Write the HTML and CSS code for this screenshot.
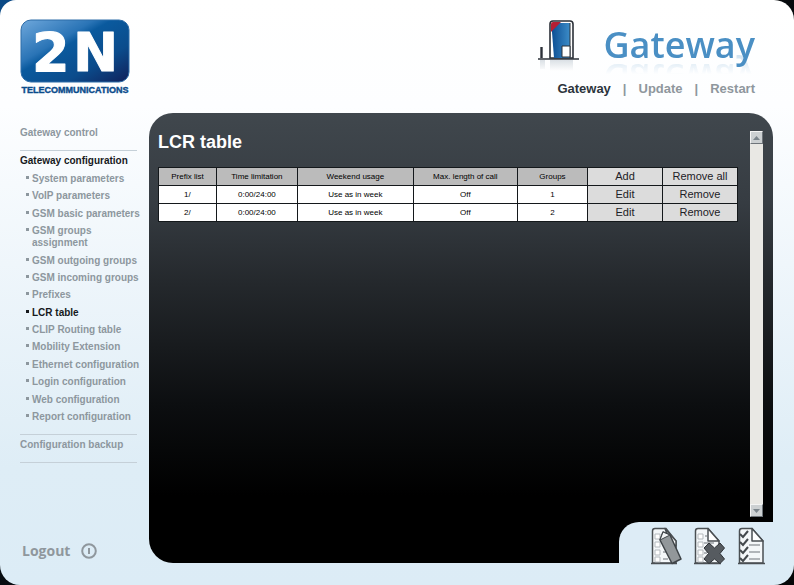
FILE: index.html
```html
<!DOCTYPE html>
<html lang="en">
<head>
<meta charset="utf-8">
<title>2N Gateway - LCR table</title>
<link rel="stylesheet" href="styles.css">
</head>
<body>
<div class="page">
  <header class="header">
    <svg class="logo" viewBox="0 0 110 76" role="img" aria-label="2N Telecommunications">
      <defs>
        <linearGradient id="badge" x1="0" y1="0" x2="1" y2="1">
          <stop offset="0" stop-color="#6fa8dc"/>
          <stop offset=".34" stop-color="#2a74b6"/>
          <stop offset=".42" stop-color="#0a5a9e"/>
          <stop offset=".7" stop-color="#0b4c8c"/>
          <stop offset="1" stop-color="#10205a"/>
        </linearGradient>
      </defs>
      <rect x="1" y="1" width="108" height="62" rx="10" fill="url(#badge)" stroke="#2d6ca8"/>
      <text class="logo-mark" y="52"><tspan x="12">2</tspan><tspan x="53">N</tspan></text>
      <text class="logo-name" x="55" y="74" text-anchor="middle">TELECOMMUNICATIONS</text>
    </svg>
    <div class="brand">
      <div class="product">
        <svg class="device" viewBox="0 0 42 52" aria-hidden="true">
          <defs>
            <linearGradient id="case" x1="0" y1="0" x2="1" y2="0">
              <stop offset="0" stop-color="#0d4f94"/>
              <stop offset="1" stop-color="#3c8cc8"/>
            </linearGradient>
            <linearGradient id="fade" x1="0" y1="0" x2="0" y2="1">
              <stop offset="0" stop-color="#c3ccd4"/>
              <stop offset="1" stop-color="#fff"/>
            </linearGradient>
          </defs>
          <path d="M3 41h5v9H3zM13 41h23v11H13z" fill="url(#fade)" opacity=".6"/>
          <path d="M13 39V5q0-3 3-3h17q3 0 3 3v34z" fill="#fff" stroke="#2b3038" stroke-width="1.6"/>
          <path d="M15 13V4h18v35H17z" fill="url(#case)"/>
          <path d="M14 13V5q0-2 2-2h8z" fill="#b51f34"/>
          <path d="M33 4v35" stroke="#2b3038"/>
          <path d="M25 38V27h8v11z" fill="#fff" stroke="#2b3038"/>
          <path d="M1 40h41" stroke="#2b3038" stroke-width="1.6"/>
          <path d="M4.500 28v11" stroke="#2b3038" stroke-width="2.400"/>
        </svg>
        <span class="product-name">Gateway</span>
      </div>
      <nav class="topnav" aria-label="Main">
        <a class="current" href="#gateway">Gateway</a>
        <span>|</span>
        <a href="#update">Update</a>
        <span>|</span>
        <a href="#restart">Restart</a>
      </nav>
    </div>
  </header>

  <div class="body">
    <aside class="sidebar">
      <nav class="menu" aria-label="Sections">
        <a class="section" href="#control">Gateway control</a>
        <div class="group">
          <a class="section current" href="#configuration">Gateway configuration</a>
          <ul class="items">
            <li><a href="#system">System parameters</a></li>
            <li><a href="#voip">VoIP parameters</a></li>
            <li><a href="#gsm">GSM basic parameters</a></li>
            <li><a href="#groups">GSM groups assignment</a></li>
            <li><a href="#outgoing">GSM outgoing groups</a></li>
            <li><a href="#incoming">GSM incoming groups</a></li>
            <li><a href="#prefixes">Prefixes</a></li>
            <li class="current"><a href="#lcr">LCR table</a></li>
            <li><a href="#clip">CLIP Routing table</a></li>
            <li><a href="#mobility">Mobility Extension</a></li>
            <li><a href="#ethernet">Ethernet configuration</a></li>
            <li><a href="#login">Login configuration</a></li>
            <li><a href="#web">Web configuration</a></li>
            <li><a href="#report">Report configuration</a></li>
          </ul>
        </div>
        <a class="section backup" href="#backup">Configuration backup</a>
      </nav>
      <a class="logout" href="#logout">Logout
        <svg viewBox="0 0 16 16" aria-hidden="true"><circle cx="8" cy="8" r="6.800"/><path d="M8 5v6"/></svg>
      </a>
    </aside>

    <main class="panel">
      <div class="panel-body">
        <section class="content">
          <h1>LCR table</h1>
          <table class="lcr">
            <colgroup>
              <col class="c-prefix"><col class="c-time"><col class="c-weekend"><col class="c-length"><col class="c-groups"><col class="c-edit"><col class="c-remove">
            </colgroup>
            <thead>
              <tr><th>Prefix list</th><th>Time limitation</th><th>Weekend usage</th><th>Max. length of call</th><th>Groups</th><td class="action"><button type="button">Add</button></td><td class="action"><button type="button">Remove all</button></td></tr>
            </thead>
            <tbody>
              <tr><td>1/</td><td>0:00/24:00</td><td>Use as in week</td><td>Off</td><td>1</td><td class="action"><button type="button">Edit</button></td><td class="action"><button type="button">Remove</button></td></tr>
              <tr><td>2/</td><td>0:00/24:00</td><td>Use as in week</td><td>Off</td><td>2</td><td class="action"><button type="button">Edit</button></td><td class="action"><button type="button">Remove</button></td></tr>
            </tbody>
          </table>
        </section>
        <div class="scrollbar">
          <button type="button" aria-label="Scroll up"><svg viewBox="0 0 7 4" aria-hidden="true"><path d="M0 4 3.500 0 7 4z"/></svg></button>
          <button type="button" aria-label="Scroll down"><svg viewBox="0 0 7 4" aria-hidden="true"><path d="M0 0h7L3.500 4z"/></svg></button>
        </div>
      </div>
      <div class="toolbar">
        <button type="button" aria-label="Edit">
          <svg viewBox="0 0 31 38" aria-hidden="true">
            <path class="sheet" d="M1.500 36V4q0-2.500 2.500-2.500h11L25 14v22z"/>
            <path class="box" d="M4 7h5v5H4zM4 15h5v5H4zM4 23h5v5H4zM4 30h5v5H4z"/>
            <path class="rule" d="M12 25h3M12 32h5"/>
            <path class="fold" d="M14 1.500 25 14v5l-6-4z"/>
            <path class="base" d="M0 36.500h26"/>
            <path class="pencil" d="M9 13 12 5l7 3 11 24-9 4.500z"/>
            <path class="tip" d="M9 13 12 5l7 3-4 2z"/>
          </svg>
        </button>
        <button type="button" aria-label="Delete">
          <svg viewBox="0 0 31 38" aria-hidden="true">
            <path class="sheet" d="M1.500 36V4q0-2.500 2.500-2.500h10L25 14v22z"/>
            <path class="box" d="M4 7h5v5H4zM4 15h5v5H4zM4 23h5v5H4zM4 30h5v5H4z"/>
            <path class="rule" d="M11 9h2M10 16h10M10 26h3M10 32h3"/>
            <path class="fold" d="M14 1.500V14h11z"/>
            <path class="base" d="M0 36.500h27"/>
            <path class="cross" d="m10 21 5-5 5.500 5 5.500-5 4.500 5-4.500 5.500 4.500 5.500-4.500 4.500-5.500-4.500-5.500 4.500-5-4.500 4.500-5.500z"/>
          </svg>
        </button>
        <button type="button" aria-label="Confirm all">
          <svg viewBox="0 0 31 38" aria-hidden="true">
            <path class="sheet" d="M2.500 36V4q0-2.500 2.500-2.500h10L26 14v22z"/>
            <path class="rule" d="M12 18h11M12 25h11M12 32h11"/>
            <path class="fold" d="M15 1.500V14h11z"/>
            <path class="base" d="M1 36.500h27"/>
            <path class="tick" d="m3 7 3 3 5-6M3 15l3 3 5-6M3 23l3 3 5-6M3 31l3 3 5-6"/>
          </svg>
        </button>
      </div>
    </main>
  </div>
</div>
</body>
</html>
```
FILE: styles.css
```css
* { box-sizing: border-box; }

body {
  margin: 0;
  font-family: "Liberation Sans", Arial, sans-serif;
  background: radial-gradient(circle at 0 0, #0b4a86 0, #0b4a86 60px, #0a1018 300px, #050708 100%);
}

a { color: inherit; text-decoration: none; }

button { font: inherit; cursor: pointer; }

.page {
  display: flex;
  flex-direction: column;
  min-height: 100vh;
  border-radius: 16px 20px 20px 20px;
  background: linear-gradient(#fff 0, #fdfeff 18%, #eff6fb 45%, #deedf6 80%, #dcecf6 100%);
}

/* Header */
.header {
  display: flex;
  justify-content: space-between;
  height: 113px;
  padding: 19px 39px 0 20px;
}

.logo { width: 110px; height: 76px; }

.logo-mark {
  font: bold 54px "DejaVu Sans", sans-serif;
  fill: #fff;
  stroke: #fff;
  stroke-linejoin: round;
}

.logo-name {
  font: bold 9px "Liberation Sans Narrow", "Liberation Sans", sans-serif;
  fill: #0b4c8c;
  stroke: #0b4c8c;
  stroke-width: .4px;
}

.brand {
  display: flex;
  flex-direction: column;
  align-items: flex-end;
}

.product {
  display: flex;
  gap: 25px;
  height: 62px;
}

.device { width: 42px; height: 52px; }

.product-name {
  height: 52px;
  font: 600 36px/52px "Open Sans", sans-serif;
  color: #4a8fc4;
  -webkit-box-reflect: below -20px linear-gradient(transparent 55%, rgba(0, 0, 0, .3));
}

.topnav {
  display: flex;
  gap: 12px;
  font-size: 13px;
  font-weight: bold;
  line-height: 16px;
  color: #8f979d;
}

.topnav .current { color: #2c343b; }

/* Columns under the header */
.body {
  display: flex;
  flex: 1;
  padding: 0 21px 22px 20px;
}

.sidebar {
  display: flex;
  flex-direction: column;
  flex: 0 0 129px;
  justify-content: space-between;
  padding: 14px 12px 2px 0;
  font-size: 10px;
  font-weight: bold;
  line-height: 12px;
  color: #8d979e;
}

.menu { display: flex; flex-direction: column; }

.section { white-space: nowrap; }

.current { color: #16191c; }

.group {
  margin-top: 11px;
  padding: 4px 0 11px;
  border: solid #c5d0d8;
  border-width: 1px 0;
}

.items {
  display: flex;
  flex-direction: column;
  justify-content: space-between;
  height: 250px;
  margin: 6px -6px 0 0;
  padding: 0;
  list-style: none;
}

.items li {
  display: flex;
  gap: 3px;
  padding-left: 6px;
}

.items li::before {
  content: "";
  flex: none;
  width: 3px;
  height: 3px;
  margin-top: 3px;
  background: currentColor;
}

.backup {
  padding: 4px 0 11px;
  border-bottom: 1px solid #c5d0d8;
}

.logout {
  display: flex;
  align-items: center;
  gap: 11px;
  padding-left: 2px;
  font: bold 14px/20px "Open Sans", sans-serif;
  color: #8f979d;
}

.logout svg {
  width: 16px;
  height: 16px;
  fill: none;
  stroke: currentColor;
  stroke-width: 2;
}

/* Dark panel */
.panel {
  display: flex;
  flex: 1;
  flex-direction: column;
  min-width: 0;
  border-radius: 24px 24px 0 24px;
  background: linear-gradient(#40474d 0, #363c42 20%, #24282c 38%, #0c0e10 65%, #000 85%);
}

.panel-body {
  display: flex;
  flex: 1;
  gap: 12px;
  padding: 18px 10px 5px 9px;
}

.content { flex: 1; }

h1 {
  margin: 0 0 13px;
  font-size: 18px;
  line-height: 23px;
  color: #fff;
}

.lcr {
  width: 100%;
  table-layout: fixed;
  border-collapse: collapse;
  font-size: 8px;
  line-height: 17px;
  color: #000;
  text-align: center;
}

.c-prefix { width: 10%; }
.c-time { width: 14%; }
.c-weekend { width: 20%; }
.c-length { width: 18%; }
.c-edit, .c-remove { width: 75px; }

.lcr th,
.lcr td {
  height: 18px;
  padding: 0;
  border: 1px solid #14181b;
  background: #fff;
  font-weight: normal;
}

.lcr th { background: #bbb; }

.lcr .action { background: #dcdcdc; }

.action button {
  display: block;
  width: 100%;
  padding: 0;
  border: 0;
  background: none;
  font-size: 11px;
  line-height: 17px;
  color: #1c2126;
}

.scrollbar {
  display: flex;
  flex: 0 0 13px;
  flex-direction: column;
  justify-content: space-between;
  background: #e9e8e4;
}

.scrollbar button {
  display: grid;
  place-items: center;
  width: 13px;
  height: 13px;
  padding: 0;
  border: 1px solid;
  border-color: #f4f4f4 #6e747a #6e747a #f4f4f4;
  background: #ccd0d2;
}

.scrollbar svg { width: 7px; height: 4px; fill: #7b858c; }

/* Light tab cut into the panel's lower right corner */
.toolbar {
  display: flex;
  align-self: flex-end;
  gap: 12px;
  width: 154px;
  height: 41px;
  padding: 5px 0 0 32px;
  border-radius: 20px 0 0 0;
  background: #ddecf6;
}

.toolbar button {
  height: 38px;
  padding: 0;
  border: 0;
  background: none;
}

.toolbar svg { display: block; width: 31px; height: 38px; }

.sheet { fill: #f4f7f9; stroke: #4a4f53; stroke-width: 1.500; }
.fold { fill: #fff; stroke: #4a4f53; stroke-width: 1.500; stroke-linejoin: round; }
.box { fill: #fff; stroke: #b4b9bd; }
.rule { stroke: #9ba0a4; stroke-width: 1.500; }
.base { stroke: #4a4f53; stroke-width: 1.500; }
.pencil { fill: #92979a; stroke: #3f4448; stroke-width: 1.500; stroke-linejoin: round; }
.tip { fill: #f2f4f5; stroke: #3f4448; }
.cross { fill: #565b60; stroke: #2f3337; stroke-linejoin: round; }
.tick { fill: none; stroke: #44494d; stroke-width: 2; }
```
